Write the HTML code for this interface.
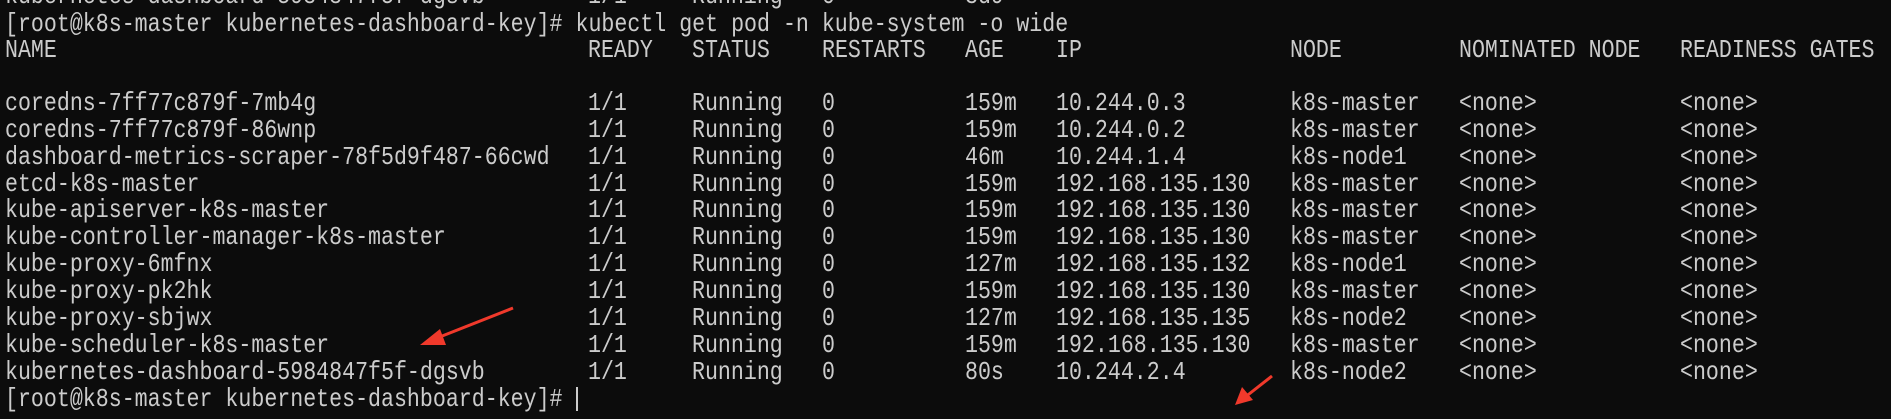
<!DOCTYPE html>
<html><head><meta charset="utf-8"><style>
html,body{margin:0;padding:0;background:#0c0c0c;width:1891px;height:419px;overflow:hidden;position:relative}
.c{position:absolute;font-family:"Liberation Mono","DejaVu Sans Mono",monospace;font-size:26px;line-height:27px;color:#cccccc;white-space:pre;transform:scaleX(0.831);transform-origin:0 50%}
</style></head><body>
<div id="t"></div>
<svg width="1891" height="419" style="position:absolute;left:0;top:0">
<line x1="513" y1="308" x2="432" y2="340" stroke="#f0392b" stroke-width="3"/>
<polygon points="420,345 440,329 446,345" fill="#f0392b"/>
<line x1="1272" y1="376" x2="1244" y2="398" stroke="#f0392b" stroke-width="3"/>
<polygon points="1235,405 1242,387 1253,400" fill="#f0392b"/>
<rect x="576" y="387" width="2" height="24" fill="#cccccc"/>
</svg>
<script>
var cols=[5,588,692,822,965,1056,1290,1459,1680];
var rows=[
[-6,["kubernetes-dashboard-5984847f5f-dgsvb","1/1","Running","0","3d9","","","",""]],
[22,["[root@k8s-master kubernetes-dashboard-key]# kubectl get pod -n kube-system -o wide"]],
[48,["NAME","READY","STATUS","RESTARTS","AGE","IP","NODE","NOMINATED NODE","READINESS GATES"]],
[101,["coredns-7ff77c879f-7mb4g","1/1","Running","0","159m","10.244.0.3","k8s-master","<none>","<none>"]],
[128,["coredns-7ff77c879f-86wnp","1/1","Running","0","159m","10.244.0.2","k8s-master","<none>","<none>"]],
[155,["dashboard-metrics-scraper-78f5d9f487-66cwd","1/1","Running","0","46m","10.244.1.4","k8s-node1","<none>","<none>"]],
[182,["etcd-k8s-master","1/1","Running","0","159m","192.168.135.130","k8s-master","<none>","<none>"]],
[208,["kube-apiserver-k8s-master","1/1","Running","0","159m","192.168.135.130","k8s-master","<none>","<none>"]],
[235,["kube-controller-manager-k8s-master","1/1","Running","0","159m","192.168.135.130","k8s-master","<none>","<none>"]],
[262,["kube-proxy-6mfnx","1/1","Running","0","127m","192.168.135.132","k8s-node1","<none>","<none>"]],
[289,["kube-proxy-pk2hk","1/1","Running","0","159m","192.168.135.130","k8s-master","<none>","<none>"]],
[316,["kube-proxy-sbjwx","1/1","Running","0","127m","192.168.135.135","k8s-node2","<none>","<none>"]],
[343,["kube-scheduler-k8s-master","1/1","Running","0","159m","192.168.135.130","k8s-master","<none>","<none>"]],
[370,["kubernetes-dashboard-5984847f5f-dgsvb","1/1","Running","0","80s","10.244.2.4","k8s-node2","<none>","<none>"]],
[397,["[root@k8s-master kubernetes-dashboard-key]# "]]
];
var h="";
rows.forEach(function(r){r[1].forEach(function(s,i){if(!s)return;
s=s.replace(/&/g,"&amp;").replace(/</g,"&lt;").replace(/>/g,"&gt;");
h+='<div class="c" style="left:'+cols[i]+'px;top:'+(r[0]-11)+'px">'+s+'</div>';});});
document.getElementById("t").innerHTML=h;
</script>
</body></html>
